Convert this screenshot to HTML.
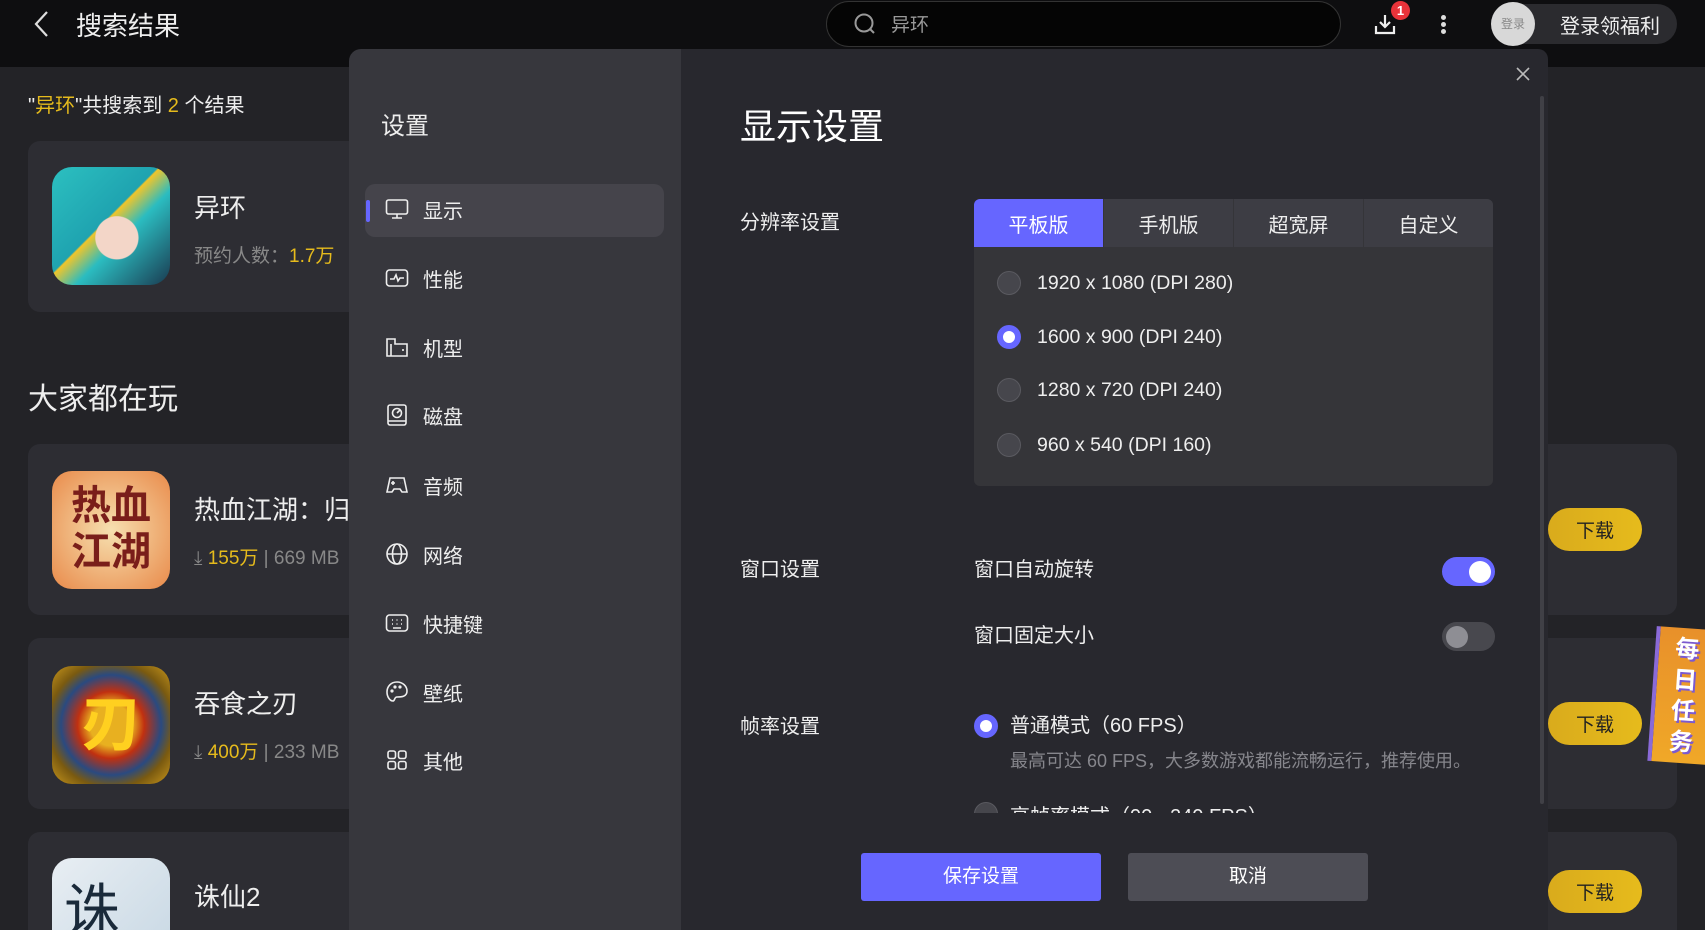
<!DOCTYPE html>
<html style="width:1705px;height:930px;overflow:hidden"><head><meta charset="utf-8">
<style>
*{margin:0;padding:0;box-sizing:border-box}
body{width:1705px;height:930px;overflow:hidden;background:#232327;font-family:"Liberation Sans","Noto Sans CJK SC",sans-serif;color:#fff}
#w{position:relative;width:1705px;height:930px;overflow:hidden}
.abs{position:absolute}
.top{left:0;top:0;width:1705px;height:67px;background:#0e0e10}
.card{background:#2d2d33;border-radius:12px}
.icon{border-radius:20px;overflow:hidden}
.dl{width:94px;height:43px;border-radius:22px;background:linear-gradient(90deg,#d9ab1c,#e6bb1c);color:#222;font-size:19px;display:flex;align-items:center;justify-content:center}
.side{left:349px;top:49px;width:332px;height:881px;background:#37373d;border-top-left-radius:12px}
.main{left:681px;top:49px;width:867px;height:881px;background:#28282e;border-top-right-radius:10px}
.item{position:absolute;left:385px;height:30px;display:flex;align-items:center;font-size:20px;color:#eee}
.item svg{width:24px;height:24px;margin-right:14px}
.tab{position:absolute;top:199px;height:48px;width:129px;background:#3d3d44;display:flex;align-items:center;justify-content:center;font-size:20px;color:#eee}
.radio{position:absolute;width:24px;height:24px;border-radius:50%;background:#46464c;border:1.5px solid #5a5a60}
.radio.on{background:#fff;border:6px solid #6666ff}
.opt{position:absolute;left:1037px;font-size:19.5px;color:#eee;line-height:24px}
.lbl{position:absolute;font-size:20px;color:#eee;line-height:26px}
</style></head><body><div id="w">
<div class="abs top"></div>
<svg class="abs" style="left:32px;top:10px" width="20" height="28" viewBox="0 0 20 28"><path d="M15 2 L4 14 L15 26" stroke="#ddd" stroke-width="2.2" fill="none"/></svg>
<div class="abs" style="left:76px;top:6px;font-size:26px;color:#eee">搜索结果</div>
<div class="abs" style="left:826px;top:1px;width:515px;height:46px;border-radius:23px;background:#050505;border:1px solid #333"></div>
<svg class="abs" style="left:853px;top:12px" width="24" height="24" viewBox="0 0 24 24"><circle cx="11" cy="11" r="8.5" stroke="#999" stroke-width="2" fill="none"/><path d="M17 17 L21 21" stroke="#999" stroke-width="2"/></svg>
<div class="abs" style="left:891px;top:10px;font-size:19px;color:#999">异环</div>
<svg class="abs" style="left:1373px;top:12px" width="24" height="24" viewBox="0 0 24 24"><path d="M12 3 V15 M7 10 L12 15 L17 10 M3 14 V21 H21 V14" stroke="#eee" stroke-width="2.2" fill="none"/></svg>
<div class="abs" style="left:1391px;top:1px;width:19px;height:19px;border-radius:50%;background:#e8333a;font-size:13px;text-align:center;line-height:19px;font-weight:bold">1</div>
<div class="abs" style="left:1441px;top:15px;width:5px;height:5px;border-radius:50%;background:#ddd;box-shadow:0 7px 0 #ddd,0 14px 0 #ddd"></div>
<div class="abs" style="left:1492px;top:4px;width:185px;height:40px;border-radius:20px;background:#2b2b2f"></div>
<div class="abs" style="left:1491px;top:2px;width:44px;height:44px;border-radius:50%;background:#d8d8d8;color:#888;font-size:12px;text-align:center;line-height:44px">登录</div>
<div class="abs" style="left:1560px;top:10px;font-size:20px;color:#eee">登录领福利</div>

<div class="abs" style="left:28px;top:89px;font-size:20px;color:#eee">"<span style="color:#e6bb1c">异环</span>"共搜索到 <span style="color:#e6bb1c">2</span> 个结果</div>
<div class="abs card" style="left:28px;top:141px;width:400px;height:171px"></div>
<div class="abs icon" style="left:52px;top:167px;width:118px;height:118px;background:radial-gradient(circle at 55% 60%,#f3d6c8 0 22%,transparent 23%),linear-gradient(135deg,#2cc0c0,#1fa3b0 45%,#f0c52a 46%,#2bbcc0 60%,#1a3a50)"></div>
<div class="abs" style="left:194px;top:188px;font-size:26px;color:#eee">异环</div>
<div class="abs" style="left:194px;top:241px;font-size:19px;color:#888">预约人数：<span style="color:#e6bb1c">1.7万</span></div>

<div class="abs" style="left:28px;top:374px;font-size:30px;color:#eee">大家都在玩</div>
<div class="abs card" style="left:28px;top:444px;width:1649px;height:171px"></div>
<div class="abs card" style="left:28px;top:638px;width:1649px;height:171px"></div>
<div class="abs card" style="left:28px;top:832px;width:1649px;height:120px"></div>
<div class="abs icon" style="left:52px;top:471px;width:118px;height:118px;background:radial-gradient(circle,#f6e0b0,#e98a4a);color:#7a1e1a;font-size:40px;font-weight:bold;line-height:46px;text-align:center;padding-top:12px">热血<br>江湖</div>
<div class="abs" style="left:194px;top:490px;font-size:26px;color:#eee">热血江湖：归</div>
<div class="abs" style="left:194px;top:543px;font-size:19px;color:#888">⤓ <span style="color:#e6bb1c">155万</span> | 669 MB</div>
<div class="abs icon" style="left:52px;top:666px;width:118px;height:118px;background:radial-gradient(circle,#e8b020 0 25%,#c03010 40%,#2a4a80 60%,#7a5a10 75%,#c8961c);color:#ffd020;font-size:60px;font-weight:bold;text-align:center;line-height:118px">刃</div>
<div class="abs" style="left:194px;top:684px;font-size:26px;color:#eee">吞食之刃</div>
<div class="abs" style="left:194px;top:737px;font-size:19px;color:#888">⤓ <span style="color:#e6bb1c">400万</span> | 233 MB</div>
<div class="abs icon" style="left:52px;top:858px;width:118px;height:100px;background:linear-gradient(135deg,#e8eef3,#c8d8e4);color:#1a2a3a;font-size:56px;padding:8px 0 0 12px">诛</div>
<div class="abs" style="left:194px;top:877px;font-size:26px;color:#eee">诛仙2</div>
<div class="abs dl" style="left:1548px;top:508px">下载</div>
<div class="abs dl" style="left:1548px;top:702px">下载</div>
<div class="abs dl" style="left:1548px;top:870px">下载</div>
<div class="abs" style="left:1652px;top:628px;width:60px;height:135px;background:linear-gradient(180deg,#e8902a,#f0a828);transform:rotate(4deg);border-left:4px solid #8a6ad8;color:#fff;font-size:24px;font-weight:bold;line-height:31px;text-align:center;padding-top:6px;text-shadow:2px 2px 0 #7b5ad0">每<br>日<br>任<br>务</div>

<div class="abs side"></div>
<div class="abs main"></div>
<div class="abs" style="left:381px;top:106px;font-size:24px;color:#eee">设置</div>
<div class="abs" style="left:365px;top:184px;width:299px;height:53px;border-radius:10px;background:#45444b"></div>
<div class="abs" style="left:366px;top:200px;width:4px;height:22px;border-radius:2px;background:#6666ff"></div>
<div class="item" style="top:194px"><svg viewBox="0 0 24 24" fill="none" stroke="#eee" stroke-width="1.6"><rect x="1.5" y="3" width="21" height="14" rx="2"/><path d="M12 17v4M7 21h10"/></svg>显示</div>
<div class="item" style="top:263px"><svg viewBox="0 0 24 24" fill="none" stroke="#eee" stroke-width="1.6"><rect x="1.5" y="4" width="21" height="16" rx="3"/><path d="M5 13h4l2-4 2 6 2-3h4"/></svg>性能</div>
<div class="item" style="top:332px"><svg viewBox="0 0 24 24" fill="none" stroke="#eee" stroke-width="1.6"><path d="M2 4h8v5h12v12H2z M6 9v12"/><path d="M17 15h2"/></svg>机型</div>
<div class="item" style="top:400px"><svg viewBox="0 0 24 24" fill="none" stroke="#eee" stroke-width="1.6"><rect x="3" y="2" width="18" height="20" rx="2"/><circle cx="12" cy="10" r="4.5"/><path d="M12 10l3-3M3 18h18"/></svg>磁盘</div>
<div class="item" style="top:470px"><svg viewBox="0 0 24 24" fill="none" stroke="#eee" stroke-width="1.6"><path d="M5 5h14l3 14h-5l-2-3H9l-2 3H2z"/><path d="M6 10h4M8 8v4M15 10h.1M17 10h.1"/></svg>音频</div>
<div class="item" style="top:539px"><svg viewBox="0 0 24 24" fill="none" stroke="#eee" stroke-width="1.6"><circle cx="12" cy="12" r="10"/><ellipse cx="12" cy="12" rx="4.5" ry="10"/><path d="M2 12h20"/></svg>网络</div>
<div class="item" style="top:608px"><svg viewBox="0 0 24 24" fill="none" stroke="#eee" stroke-width="1.6"><rect x="1.5" y="4" width="21" height="16" rx="3"/><path d="M7 9h1M11.5 9h1M16 9h1M7 13h1M11.5 13h1M16 13h1M8 17h8"/></svg>快捷键</div>
<div class="item" style="top:677px"><svg viewBox="0 0 24 24" fill="none" stroke="#eee" stroke-width="1.6"><path d="M12 2C6 2 2 6.5 2 12c0 5 3 9 6 9 2 0 1-4 4-4 4 0 10 0 10-6 0-5-4.5-9-10-9z"/><circle cx="7" cy="11" r=".8"/><circle cx="10" cy="7" r=".8"/><circle cx="15" cy="7" r=".8"/></svg>壁纸</div>
<div class="item" style="top:745px"><svg viewBox="0 0 24 24" fill="none" stroke="#eee" stroke-width="1.6"><rect x="3" y="3" width="7.5" height="7.5" rx="2"/><rect x="13.5" y="3" width="7.5" height="7.5" rx="2"/><rect x="3" y="13.5" width="7.5" height="7.5" rx="2"/><rect x="13.5" y="13.5" width="7.5" height="7.5" rx="2"/></svg>其他</div>

<svg class="abs" style="left:1515px;top:66px" width="16" height="16" viewBox="0 0 16 16"><path d="M2 2L14 14M14 2L2 14" stroke="#bbb" stroke-width="1.6"/></svg>
<div class="abs" style="left:1540px;top:96px;width:4px;height:708px;border-radius:2px;background:#404046"></div>
<div class="abs" style="left:740px;top:98px;font-size:36px;color:#fff">显示设置</div>
<div class="lbl" style="left:740px;top:210px">分辨率设置</div>
<div class="abs" style="left:974px;top:199px;width:519px;height:287px;background:#353539;border-radius:6px"></div>
<div class="tab" style="left:974px;background:#6666ff;border-top-left-radius:6px;color:#fff">平板版</div>
<div class="tab" style="left:1104px">手机版</div>
<div class="tab" style="left:1234px">超宽屏</div>
<div class="tab" style="left:1364px;border-top-right-radius:6px">自定义</div>
<div class="radio" style="left:997px;top:271px"></div><div class="opt" style="top:271px">1920 x 1080 (DPI 280)</div>
<div class="radio on" style="left:997px;top:325px"></div><div class="opt" style="top:325px">1600 x 900 (DPI 240)</div>
<div class="radio" style="left:997px;top:378px"></div><div class="opt" style="top:378px">1280 x 720 (DPI 240)</div>
<div class="radio" style="left:997px;top:433px"></div><div class="opt" style="top:433px">960 x 540 (DPI 160)</div>

<div class="lbl" style="left:740px;top:557px">窗口设置</div>
<div class="lbl" style="left:974px;top:557px">窗口自动旋转</div>
<div class="abs" style="left:1442px;top:557px;width:53px;height:29px;border-radius:15px;background:#6666ff"></div>
<div class="abs" style="left:1469px;top:561px;width:22px;height:22px;border-radius:50%;background:#fff"></div>
<div class="lbl" style="left:974px;top:623px">窗口固定大小</div>
<div class="abs" style="left:1442px;top:622px;width:53px;height:29px;border-radius:15px;background:#48484e"></div>
<div class="abs" style="left:1446px;top:626px;width:22px;height:22px;border-radius:50%;background:#8e8e94"></div>

<div class="lbl" style="left:740px;top:714px">帧率设置</div>
<div class="radio on" style="left:974px;top:714px"></div>
<div class="abs" style="left:1010px;top:709px;font-size:20px;color:#eee">普通模式（60 FPS）</div>
<div class="abs" style="left:1010px;top:747px;font-size:18px;color:#86868c">最高可达 60 FPS，大多数游戏都能流畅运行，推荐使用。</div>
<div class="abs" style="left:970px;top:790px;width:400px;height:23px;overflow:hidden">
<div class="radio" style="left:4px;top:12px"></div>
<div class="abs" style="left:40px;top:10px;font-size:20px;color:#eee;white-space:nowrap">高帧率模式（90 - 240 FPS）</div></div>

<div class="abs" style="left:861px;top:853px;width:240px;height:48px;border-radius:3px;background:#6666ff;font-size:19px;text-align:center;line-height:48px">保存设置</div>
<div class="abs" style="left:1128px;top:853px;width:240px;height:48px;border-radius:3px;background:#4d4d55;font-size:19px;text-align:center;line-height:48px">取消</div>
</div></body></html>
